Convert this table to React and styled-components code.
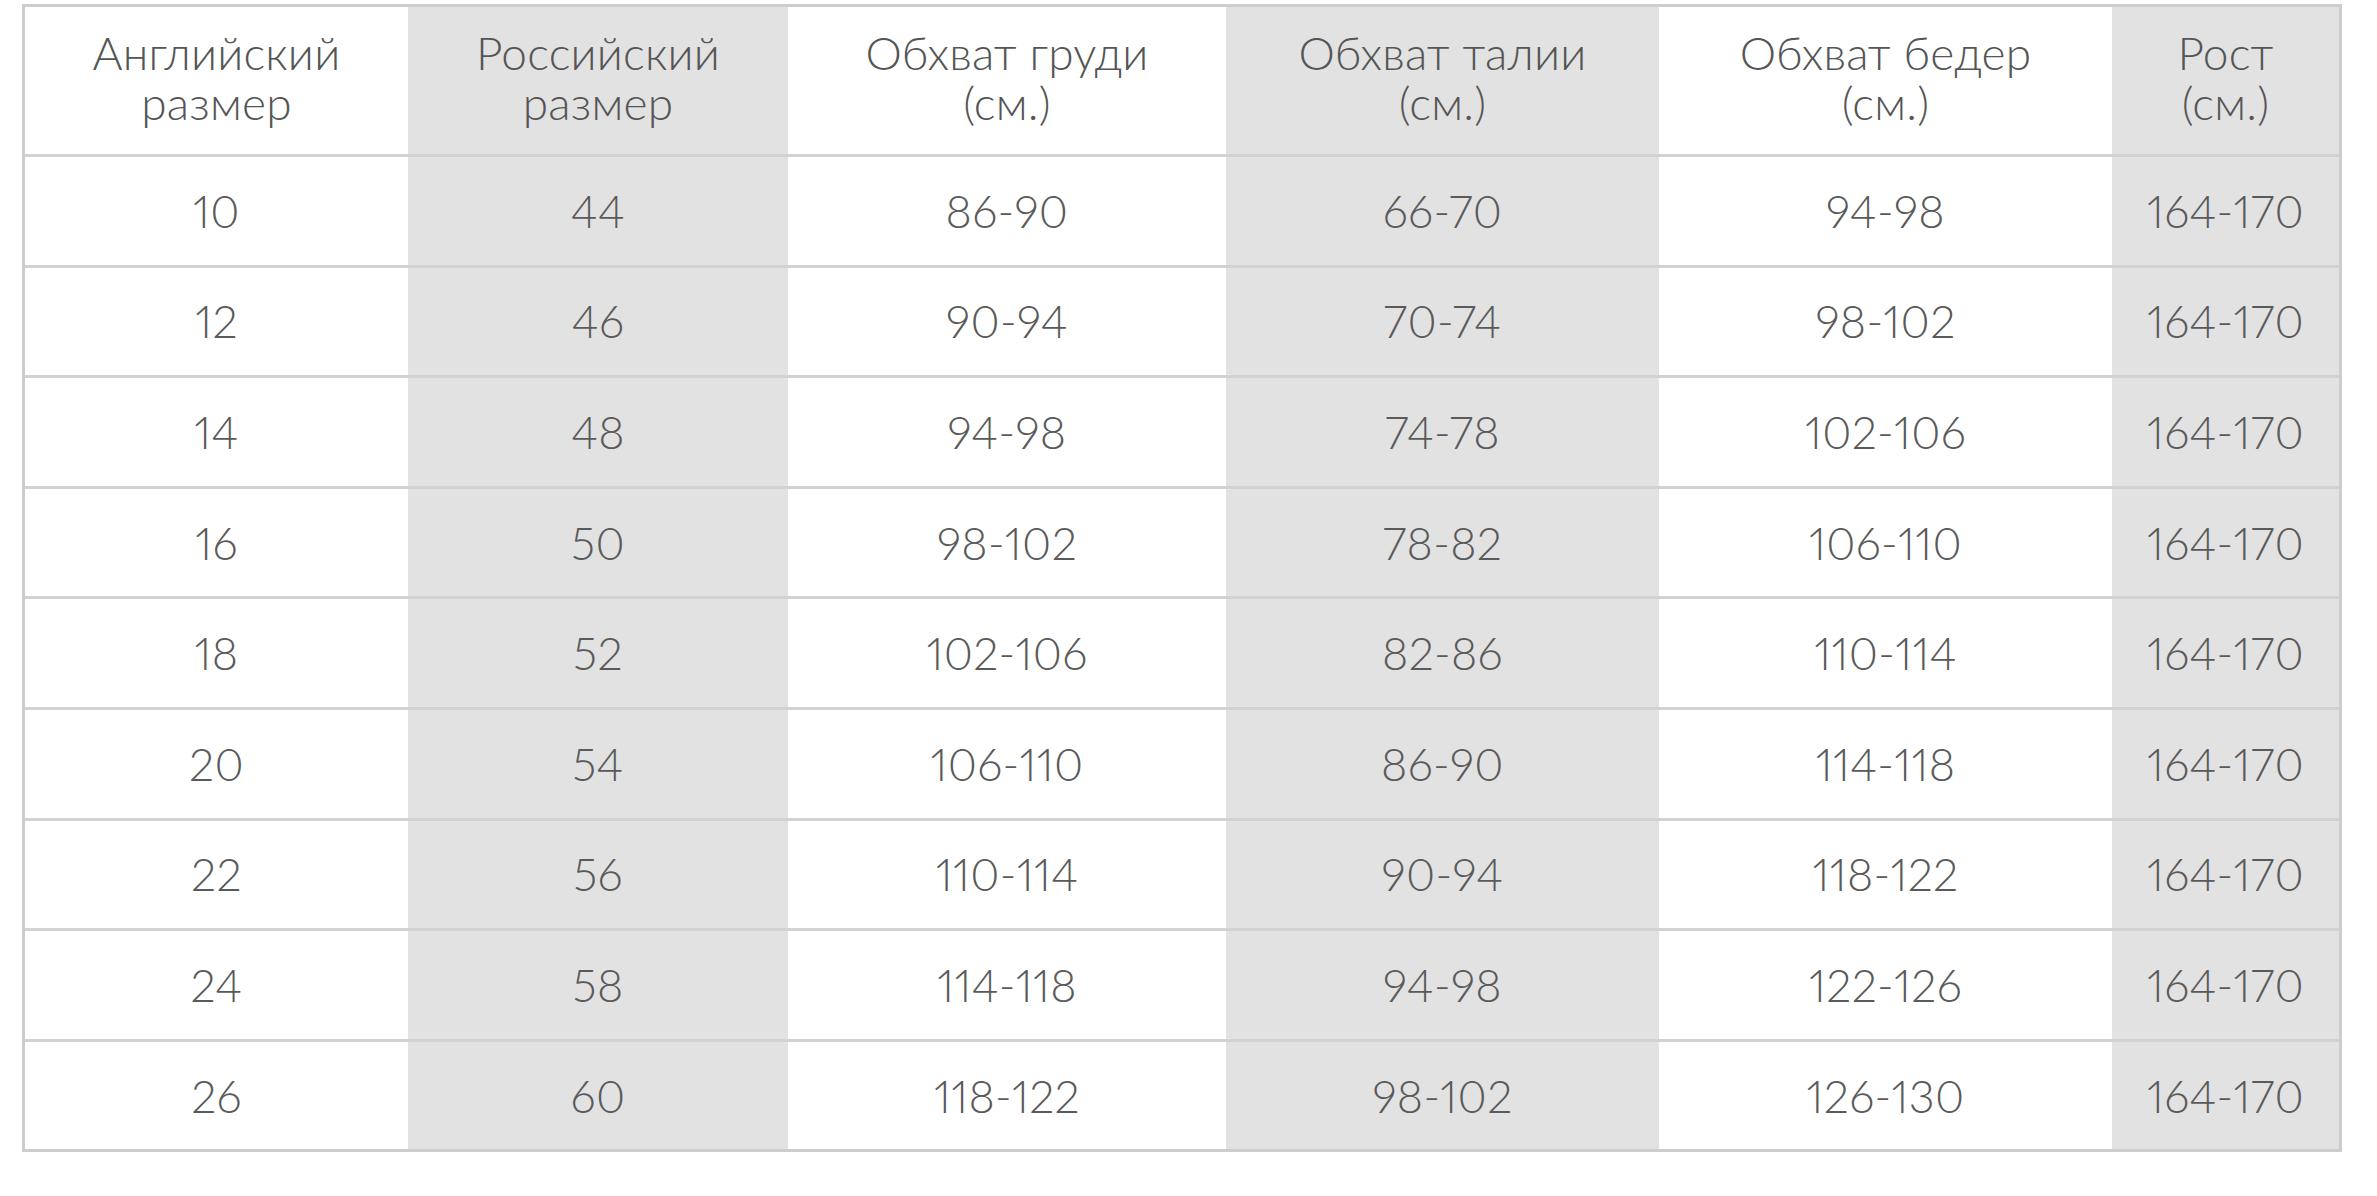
import React from "react";
import styled, { createGlobalStyle } from "styled-components";

const GlobalStyle = createGlobalStyle`
  html, body {
    margin: 0;
    padding: 0;
    background: #ffffff;
  }
  body {
    font-family: "Lato", "Liberation Sans", "Noto Sans", sans-serif;
  }
`;

const Page = styled.div`
  padding: 4px 0 0 22px;
`;

const Table = styled.div`
  display: inline-block;
  border: 3px solid #cdcdcd;
  background: #ffffff;
`;

const Row = styled.div`
  display: grid;
  grid-template-columns: 383px 380px 438px 433px 453px 227px;
  height: ${(p) => (p.$header ? "147px" : "107.6px")};
  border-top: ${(p) => (p.$first ? "none" : "3px solid #d2d2d2")};
`;

const Cell = styled.div`
  display: flex;
  align-items: center;
  justify-content: center;
  text-align: center;
  background: ${(p) => (p.$shaded ? "#e2e2e2" : "#ffffff")};
  color: #5a5a5a;
  font-size: 45px;
  font-weight: 300;
  line-height: 50px;
  font-variant-numeric: proportional-nums;
  font-feature-settings: "pnum" 1;
  letter-spacing: 0.3px;
  white-space: pre-line;
`;

const HeaderCell = styled(Cell)`
  color: #555555;
  font-size: 46px;
  letter-spacing: 0.2px;
  padding-bottom: 5px;
`;

const headers = [
  "Английский\nразмер",
  "Российский\nразмер",
  "Обхват груди\n(см.)",
  "Обхват талии\n(см.)",
  "Обхват бедер\n(см.)",
  "Рост\n(см.)",
];

const rows = [
  ["10", "44", "86-90", "66-70", "94-98", "164-170"],
  ["12", "46", "90-94", "70-74", "98-102", "164-170"],
  ["14", "48", "94-98", "74-78", "102-106", "164-170"],
  ["16", "50", "98-102", "78-82", "106-110", "164-170"],
  ["18", "52", "102-106", "82-86", "110-114", "164-170"],
  ["20", "54", "106-110", "86-90", "114-118", "164-170"],
  ["22", "56", "110-114", "90-94", "118-122", "164-170"],
  ["24", "58", "114-118", "94-98", "122-126", "164-170"],
  ["26", "60", "118-122", "98-102", "126-130", "164-170"],
];

const isShaded = (i) => i % 2 === 1;

export default function App() {
  return (
    <>
      <GlobalStyle />
      <Page>
        <Table>
          <Row $header $first>
            {headers.map((h, i) => (
              <HeaderCell key={i} $shaded={isShaded(i)}>
                {h}
              </HeaderCell>
            ))}
          </Row>
          {rows.map((r, ri) => (
            <Row key={ri}>
              {r.map((v, ci) => (
                <Cell key={ci} $shaded={isShaded(ci)}>
                  {v}
                </Cell>
              ))}
            </Row>
          ))}
        </Table>
      </Page>
    </>
  );
}
